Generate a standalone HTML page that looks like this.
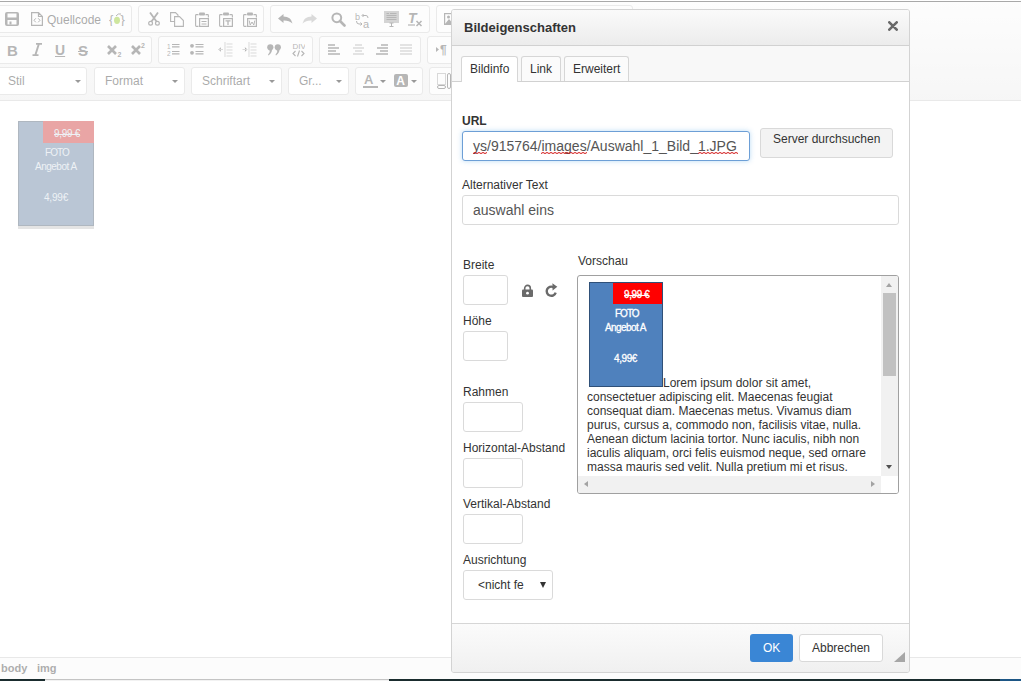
<!DOCTYPE html>
<html><head><meta charset="utf-8">
<style>
*{box-sizing:border-box}
html,body{margin:0;padding:0;width:1021px;height:681px;overflow:hidden;background:#fff;font-family:"Liberation Sans",sans-serif}
.a{position:absolute}
.t{position:absolute;white-space:nowrap;line-height:1}
#editor{position:absolute;left:0;top:0;width:1021px;height:681px}
.topline{left:0;top:1px;width:1021px;height:1px;background:#a9a9a9}
.top{left:0;top:2px;width:1021px;height:99px;background:linear-gradient(#fafafa,#ededed);border-bottom:1px solid #d3d3d3}
.grp{position:absolute;border:1px solid #d4d4d4;border-radius:3px;background:#fafafa}
.cmb{position:absolute;border:1px solid #d4d4d4;border-radius:3px;background:#fff}
.cmb span{position:absolute;left:11px;top:8px;line-height:1;white-space:nowrap}
.cmb i{position:absolute;top:12px;width:0;height:0;border-left:3px solid transparent;border-right:3px solid transparent;border-top:3px solid #575757}
.ic{position:absolute}
.status{left:0;top:657px;width:1021px;height:22px;background:#f8f8f8;border-top:1px solid #d1d1d1}
.status span{position:absolute;top:5px;font-size:11px;line-height:1;font-weight:bold;color:#5a5a5a}
#overlay{position:absolute;left:0;top:0;width:1021px;height:679px;background:rgba(255,255,255,0.5)}
.bottomstrip{left:0;top:679px;width:1021px;height:2px;background:#1b2e30}
/* dialog */
#dlg{position:absolute;left:451px;top:9px;width:459px;height:664px;border:1px solid #d3d3d3;border-radius:3px;background:#fff;overflow:hidden}
#dlg .hdr{position:absolute;left:0;top:0;width:457px;height:36px;background:linear-gradient(#fafafa,#ececec);border-bottom:1px solid #d1d1d1}
#dlg .tabs{position:absolute;left:0;top:36px;width:457px;height:36px;background:#f8f8f8;border-bottom:1px solid #d1d1d1}
.tab{position:absolute;top:10px;height:25px;border:1px solid #d6d6d6;border-bottom:0;border-radius:3px 3px 0 0;background:#fbfbfb;font-size:12px;color:#333}
.tab span{position:absolute;top:6px;line-height:1;white-space:nowrap}
.lbl{position:absolute;font-size:12px;line-height:1;color:#333;white-space:nowrap}
.inp{position:absolute;border:1px solid #dadada;border-radius:3px;background:#fff}
#dlg .ftr{position:absolute;left:0;top:613px;width:457px;height:49px;background:linear-gradient(#fbfbfb,#f0f0f0);border-top:1px solid #d6d6d6}
.btn{position:absolute;border-radius:3px;font-size:12px;line-height:1;white-space:nowrap}
.prev{position:absolute;left:125px;top:265px;width:322px;height:219px;border:1px solid #a0a0a0;border-radius:3px;background:#fff;overflow:hidden}
.ln{position:absolute;font-size:12px;line-height:14px;color:#333;white-space:nowrap}
.prev .txt{position:absolute;left:10px;top:102px;font-size:12px;line-height:14px;color:#333;width:290px}
</style></head><body>
<div id="editor">
<div class="a top"></div>
<div class="grp" style="left:-3px;top:5px;width:135px;height:28px"></div>
<div class="grp" style="left:138px;top:5px;width:126px;height:28px"></div>
<div class="grp" style="left:270px;top:5px;width:160px;height:28px"></div>
<div class="grp" style="left:436px;top:5px;width:197px;height:28px"></div>
<div class="grp" style="left:-3px;top:36px;width:155px;height:28px"></div>
<div class="grp" style="left:158px;top:36px;width:155px;height:28px"></div>
<div class="grp" style="left:319px;top:36px;width:102px;height:28px"></div>
<div class="grp" style="left:427px;top:36px;width:300px;height:28px"></div>
<div class="cmb" style="left:-3px;top:67px;width:90px;height:28px"></div><div class="t" style="left:8px;top:75px;font-size:12px;color:#555">Stil</div><div class="a" style="left:75px;top:80px;width:0;height:0;border-left:3px solid transparent;border-right:3px solid transparent;border-top:3px solid #333"></div>
<div class="cmb" style="left:94px;top:67px;width:91px;height:28px"></div><div class="t" style="left:105px;top:75px;font-size:12px;color:#555">Format</div><div class="a" style="left:172px;top:80px;width:0;height:0;border-left:3px solid transparent;border-right:3px solid transparent;border-top:3px solid #333"></div>
<div class="cmb" style="left:191px;top:67px;width:91px;height:28px"></div><div class="t" style="left:202px;top:75px;font-size:12px;color:#555">Schriftart</div><div class="a" style="left:269px;top:80px;width:0;height:0;border-left:3px solid transparent;border-right:3px solid transparent;border-top:3px solid #333"></div>
<div class="cmb" style="left:288px;top:67px;width:61px;height:28px"></div><div class="t" style="left:299px;top:75px;font-size:12px;color:#555">Gr...</div><div class="a" style="left:336px;top:80px;width:0;height:0;border-left:3px solid transparent;border-right:3px solid transparent;border-top:3px solid #333"></div>
<div class="grp" style="left:355px;top:67px;width:68px;height:28px"></div>
<div class="grp" style="left:429px;top:67px;width:300px;height:28px"></div>
<svg class="a" style="left:5px;top:12px" width="14" height="14" viewBox="0 0 14 14" ><path fill="#6c6c6c" fill-rule="evenodd" d="M2,0 H12 A2,2 0 0 1 14,2 V12 A2,2 0 0 1 12,14 H2 A2,2 0 0 1 0,12 V2 A2,2 0 0 1 2,0 Z M2.5,1.5 V5.5 H11.5 V1.5 Z M2.5,8 V12.5 H11.5 V8 Z"/><rect x="4.5" y="9.5" width="2" height="3" fill="#6c6c6c"/></svg>
<svg class="a" style="left:31px;top:12px" width="12" height="14" viewBox="0 0 12 14" ><path fill="none" stroke="#6c6c6c" stroke-width="1.2" d="M0.6,0.6 H7.5 L11.4,4.5 V13.4 H0.6 Z M7.5,0.6 V4.5 H11.4"/><path fill="none" stroke="#6c6c6c" stroke-width="1" d="M4.8,6.3 L3,8.3 L4.8,10.3 M7.2,6.3 L9,8.3 L7.2,10.3"/></svg>
<div class="t" style="left:47px;top:14px;font-size:12px;color:#555">Quellcode</div>
<svg class="a" style="left:109px;top:12px" width="17" height="14" viewBox="0 0 17 14" ><text x="0" y="11.5" font-family="Liberation Sans" font-size="13" fill="#6c6c6c">{</text><text x="11.5" y="11.5" font-family="Liberation Sans" font-size="13" fill="#6c6c6c">}</text><ellipse cx="8" cy="8.3" rx="3" ry="3.6" fill="#9ccc3c"/><path d="M7,4 Q9,1 12,2" stroke="#6c6c6c" stroke-width="1" fill="none"/></svg>
<svg class="a" style="left:148px;top:12px" width="12" height="14" viewBox="0 0 12 14" ><path d="M2,0.5 L8.5,9.5 M10,0.5 L3.5,9.5" stroke="#6c6c6c" stroke-width="1.8"/><circle cx="2.6" cy="11.3" r="1.9" fill="none" stroke="#6c6c6c" stroke-width="1.2"/><circle cx="9.4" cy="11.3" r="1.9" fill="none" stroke="#6c6c6c" stroke-width="1.2"/></svg>
<svg class="a" style="left:170px;top:12px" width="14" height="15" viewBox="0 0 14 15" ><path fill="none" stroke="#6c6c6c" stroke-width="1.1" d="M4.6,9.5 H0.6 V0.6 H5.5 L8,3.1 V4.6 M4.6,4.6 H9.5 L13.4,8.5 V14.4 H4.6 Z"/></svg>
<svg class="a" style="left:195px;top:12px" width="14" height="15" viewBox="0 0 14 15" ><path fill="none" stroke="#6c6c6c" stroke-width="1.1" d="M3.5,2.6 H1.4 Q0.6,2.6 0.6,3.4 V13.6 Q0.6,14.4 1.4,14.4 H3.5 M10.5,2.6 H12.6 Q13.4,2.6 13.4,3.4 V5.5"/><rect x="4" y="0.5" width="6" height="3" rx="1" fill="#6c6c6c"/><rect x="4.6" y="6.6" width="8.8" height="7.8" fill="none" stroke="#6c6c6c" stroke-width="1.2"/><path d="M6.5,9.5 H11.5 M6.5,12 H11.5" stroke="#6c6c6c" stroke-width="1"/></svg>
<svg class="a" style="left:219px;top:12px" width="14" height="15" viewBox="0 0 14 15" ><path fill="none" stroke="#6c6c6c" stroke-width="1.1" d="M3.5,2.6 H1.4 Q0.6,2.6 0.6,3.4 V13.6 Q0.6,14.4 1.4,14.4 H3.5 M10.5,2.6 H12.6 Q13.4,2.6 13.4,3.4 V5.5"/><rect x="4" y="0.5" width="6" height="3" rx="1" fill="#6c6c6c"/><rect x="4.6" y="6.6" width="8.8" height="7.8" fill="none" stroke="#6c6c6c" stroke-width="1.2"/><path d="M6.5,8.8 H11.5 M9,8.8 V13" stroke="#6c6c6c" stroke-width="1.3"/></svg>
<svg class="a" style="left:243px;top:12px" width="14" height="15" viewBox="0 0 14 15" ><path fill="none" stroke="#6c6c6c" stroke-width="1.1" d="M3.5,2.6 H1.4 Q0.6,2.6 0.6,3.4 V13.6 Q0.6,14.4 1.4,14.4 H3.5 M10.5,2.6 H12.6 Q13.4,2.6 13.4,3.4 V5.5"/><rect x="4" y="0.5" width="6" height="3" rx="1" fill="#6c6c6c"/><rect x="4.6" y="6.6" width="8.8" height="7.8" fill="none" stroke="#6c6c6c" stroke-width="1.2"/><path d="M6.2,8.5 L7.2,13 L9,10 L10.8,13 L11.8,8.5" stroke="#6c6c6c" stroke-width="1" fill="none"/></svg>
<svg class="a" style="left:278px;top:14px" width="15" height="10" viewBox="0 0 15 10" ><path d="M0,4.5 L5.5,0 V2.6 Q13,2.6 14.5,9.5 Q11,6.3 5.5,6.5 V9 Z" fill="#6c6c6c"/></svg>
<svg class="a" style="left:302px;top:14px" width="15" height="10" viewBox="0 0 15 10" ><path d="M15,4.5 L9.5,0 V2.6 Q2,2.6 0.5,9.5 Q4,6.3 9.5,6.5 V9 Z" fill="#b5b5b5"/></svg>
<svg class="a" style="left:331px;top:12px" width="15" height="15" viewBox="0 0 15 15" ><circle cx="5.8" cy="5.8" r="4.4" fill="none" stroke="#6c6c6c" stroke-width="2"/><path d="M9,9 L13.5,13.5" stroke="#6c6c6c" stroke-width="2.6" stroke-linecap="round"/></svg>
<svg class="a" style="left:355px;top:12px" width="16" height="16" viewBox="0 0 16 16" ><text x="0" y="8" font-family="Liberation Sans" font-size="9" fill="#6c6c6c">b</text><text x="8" y="15.5" font-family="Liberation Sans" font-size="11" fill="#6c6c6c">a</text><path d="M7.5,3.5 H11 Q13,3.5 13,6 M8.5,2 L7,3.5 L8.5,5 M1.5,9 Q1.5,12 4,12 H7 M5.5,10.5 L7,12 L5.5,13.5" stroke="#6c6c6c" stroke-width="1" fill="none"/></svg>
<svg class="a" style="left:384px;top:11px" width="15" height="16" viewBox="0 0 15 16" ><rect x="0" y="0" width="15" height="12" fill="#a8a8a8"/><path d="M2.5,2.5 H5 M6,2.5 H12.5 M2.5,4.5 H12.5 M2.5,6.5 H12.5 M2.5,8.5 H12.5" stroke="#6c6c6c" stroke-width="1"/><path d="M5.5,12 H9.5 M7.5,12 V15.5 M5.5,15.5 H9.5" stroke="#6c6c6c" stroke-width="1"/></svg>
<svg class="a" style="left:408px;top:12px" width="15" height="15" viewBox="0 0 15 15" ><text x="0" y="11" font-family="Liberation Sans" font-weight="bold" font-style="italic" font-size="14" fill="#6c6c6c">T</text><path d="M0,13 H7" stroke="#6c6c6c" stroke-width="1.2"/><path d="M8.5,9 L13.5,14 M13.5,9 L8.5,14" stroke="#6c6c6c" stroke-width="1.5"/></svg>
<svg class="a" style="left:444px;top:13px" width="14" height="12" viewBox="0 0 14 12" ><rect x="0.6" y="0.6" width="12.8" height="10.8" fill="none" stroke="#6c6c6c" stroke-width="1.2"/><circle cx="4.5" cy="4" r="1.5" fill="#6c6c6c"/><path d="M1,11 L5,6 L7.5,9 L9.5,7.5 L13,11 Z" fill="#6c6c6c"/></svg>
<div class="t" style="left:7px;top:43px;font-size:15px;font-weight:bold;font-style:normal;color:#6c6c6c;">B</div>
<svg class="a" style="left:32px;top:43px" width="11" height="13" viewBox="0 0 11 13" ><path d="M4,0 H10 V1.7 H7.6 L4.6,11.3 H6.5 V13 H0.5 V11.3 H2.6 L5.6,1.7 H4 Z" fill="#6c6c6c"/></svg>
<div class="t" style="left:55px;top:43px;font-size:14px;font-weight:bold;font-style:normal;color:#6c6c6c;text-decoration:underline">U</div>
<div class="t" style="left:78px;top:43px;font-size:15px;font-weight:bold;font-style:normal;color:#6c6c6c;text-decoration:line-through">S</div>
<svg class="a" style="left:107px;top:44px" width="15" height="13" viewBox="0 0 15 13" ><path d="M1,2 L9,10 M9,2 L1,10" stroke="#6c6c6c" stroke-width="2.6"/><text x="10.5" y="12.5" font-family="Liberation Sans" font-weight="bold" font-size="7" fill="#6c6c6c">2</text></svg>
<svg class="a" style="left:131px;top:42px" width="15" height="13" viewBox="0 0 15 13" ><path d="M1,4 L9,12 M9,4 L1,12" stroke="#6c6c6c" stroke-width="2.6"/><text x="10" y="6" font-family="Liberation Sans" font-weight="bold" font-size="7" fill="#6c6c6c">2</text></svg>
<svg class="a" style="left:167px;top:43px" width="13" height="13" viewBox="0 0 13 13" ><text x="0" y="5.5" font-family="Liberation Sans" font-size="6.5" fill="#6c6c6c">1</text><text x="0" y="12.5" font-family="Liberation Sans" font-size="6.5" fill="#6c6c6c">2</text><path d="M5,1.5 H12.5 M5,3.8 H12.5 M5,8.5 H12.5 M5,10.8 H12.5" stroke="#6c6c6c" stroke-width="1.2"/></svg>
<svg class="a" style="left:190px;top:43px" width="14" height="13" viewBox="0 0 14 13" ><circle cx="2" cy="2.8" r="1.9" fill="#6c6c6c"/><circle cx="2" cy="9.8" r="1.9" fill="#6c6c6c"/><path d="M5.5,1.5 H13.5 M5.5,3.8 H13.5 M5.5,8.5 H13.5 M5.5,10.8 H13.5" stroke="#6c6c6c" stroke-width="1.2"/></svg>
<svg class="a" style="left:218px;top:42px" width="15" height="15" viewBox="0 0 15 15" ><path d="M0.5,7.5 H5 M2.5,5.5 L0.5,7.5 L2.5,9.5 M7,0 V15 M8.5,2 H14.5 M8.5,5 H14.5 M8.5,8 H14.5 M8.5,11 H14.5 M8.5,14 H14.5" stroke="#b5b5b5" stroke-width="1"/></svg>
<svg class="a" style="left:242px;top:42px" width="15" height="15" viewBox="0 0 15 15" ><path d="M0.5,7.5 H5 M3,5.5 L5,7.5 L3,9.5 M7,0 V15 M8.5,2 H14.5 M8.5,5 H14.5 M8.5,8 H14.5 M8.5,11 H14.5 M8.5,14 H14.5" stroke="#b5b5b5" stroke-width="1"/></svg>
<svg class="a" style="left:267px;top:44px" width="15" height="12" viewBox="0 0 15 12" ><circle cx="3.3" cy="3.3" r="3.1" fill="#6c6c6c"/><path d="M4.6,4.5 Q6,8 1.5,11.5 L1,10.8 Q3.6,8 2.6,5.5 Z" fill="#6c6c6c"/><circle cx="10.8" cy="3.3" r="3.1" fill="#6c6c6c"/><path d="M12.1,4.5 Q13.5,8 9,11.5 L8.5,10.8 Q11.1,8 10.1,5.5 Z" fill="#6c6c6c"/></svg>
<svg class="a" style="left:292px;top:42px" width="13" height="15" viewBox="0 0 13 15" ><text x="0.5" y="7" font-family="Liberation Sans" font-size="8" fill="#6c6c6c">DIV</text><path d="M3.5,9 L1,11.5 L3.5,14 M9.5,9 L12,11.5 L9.5,14 M7.5,8.5 L5.5,14.5" stroke="#6c6c6c" stroke-width="1.1" fill="none"/></svg>
<svg class="a" style="left:328px;top:44px" width="13" height="11" viewBox="0 0 13 11" ><path d="M0,1 H7 M0,4 H11 M0,7 H8 M0,10 H12 " stroke="#6c6c6c" stroke-width="1.5"/></svg>
<svg class="a" style="left:352px;top:44px" width="13" height="11" viewBox="0 0 13 11" ><path d="M3,1 H10 M1,4 H12 M3,7 H10 M1,10 H12 " stroke="#b5b5b5" stroke-width="1.5"/></svg>
<svg class="a" style="left:376px;top:44px" width="13" height="11" viewBox="0 0 13 11" ><path d="M5,1 H12 M1,4 H12 M4,7 H12 M0,10 H12 " stroke="#6c6c6c" stroke-width="1.5"/></svg>
<svg class="a" style="left:400px;top:44px" width="13" height="11" viewBox="0 0 13 11" ><path d="M0,1 H12 M0,4 H12 M0,7 H12 M0,10 H12 " stroke="#b5b5b5" stroke-width="1.5"/></svg>
<svg class="a" style="left:436px;top:43px" width="14" height="13" viewBox="0 0 14 13" ><path d="M0,4 L3,6.5 L0,9 Z" fill="#6c6c6c"/><text x="4" y="11" font-family="Liberation Sans" font-weight="bold" font-size="12" fill="#6c6c6c">&#182;</text></svg>
<svg class="a" style="left:363px;top:73px" width="16" height="16" viewBox="0 0 16 16" ><text x="1" y="11" font-family="Liberation Sans" font-weight="bold" font-size="13" fill="#6c6c6c">A</text><rect x="0" y="13" width="15" height="2" fill="#6c6c6c"/></svg>
<div class="a" style="left:380px;top:80px;width:0;height:0;border-left:3px solid transparent;border-right:3px solid transparent;border-top:3px solid #333"></div>
<svg class="a" style="left:394px;top:74px" width="14" height="13" viewBox="0 0 14 13" ><rect x="0" y="0" width="14" height="13" rx="2" fill="#6c6c6c"/><text x="2.3" y="11" font-family="Liberation Sans" font-weight="bold" font-size="12" fill="#fff">A</text></svg>
<div class="a" style="left:411px;top:80px;width:0;height:0;border-left:3px solid transparent;border-right:3px solid transparent;border-top:3px solid #333"></div>
<svg class="a" style="left:437px;top:73px" width="16" height="16" viewBox="0 0 16 16" ><rect x="0.5" y="0.5" width="8" height="11" fill="none" stroke="#6c6c6c" stroke-dasharray="1,1"/><rect x="0.5" y="12.5" width="8" height="3" rx="1.5" fill="none" stroke="#6c6c6c"/><rect x="10.5" y="0.5" width="3" height="15" rx="1.5" fill="none" stroke="#6c6c6c"/></svg>
<div class="a" style="left:18px;top:121px;width:76px;height:105px;background:#758dab;border:1px solid #5f6e80">
  <div class="a" style="left:24px;top:-1px;width:51px;height:22px;background:#d34b4b"></div>
  <div class="t" style="left:35px;top:7px;font-size:10px;color:#dde3ea;letter-spacing:-0.3px;text-decoration:line-through">9,99 €</div>
  <div class="t" style="left:26px;top:26px;font-size:10px;color:#dde3ea;letter-spacing:-0.9px">FOTO</div>
  <div class="t" style="left:16px;top:40px;font-size:10px;color:#dde3ea;letter-spacing:-0.5px">Angebot A</div>
  <div class="t" style="left:25px;top:71px;font-size:10px;color:#dde3ea;letter-spacing:-0.2px">4,99€</div>
</div>
<div class="a" style="left:18px;top:226px;width:76px;height:3px;background:#c8c8c8"></div>
<div class="a status"><span style="left:1px">body</span><span style="left:37px">img</span></div>
</div>
<div id="overlay"></div>
<div class="a topline"></div>
<div class="a" style="left:0;top:679px;width:45px;height:2px;background:#1a2c2e"></div>
<div class="a" style="left:45px;top:679px;width:344px;height:1px;background:#c4c4c4"></div>
<div class="a" style="left:45px;top:680px;width:344px;height:1px;background:#f2f2f2"></div>
<div class="a" style="left:389px;top:679px;width:611px;height:2px;background:#1a2c2e"></div>
<div class="a" style="left:1000px;top:679px;width:21px;height:2px;background:#1d5685"></div>
<div id="dlg">
  <div class="hdr"><div class="t" style="left:12px;top:11px;font-size:13px;font-weight:bold;color:#333">Bildeigenschaften</div></div>
  <div class="tabs">
    <div class="tab" style="left:9px;width:57px;background:#fff;height:26px"><span style="left:8px">Bildinfo</span></div>
    <div class="tab" style="left:69px;width:40px"><span style="left:8px">Link</span></div>
    <div class="tab" style="left:112px;width:65px"><span style="left:8px">Erweitert</span></div>
  </div>
  <div class="lbl" style="left:10px;top:105px;font-weight:bold;color:#333">URL</div>
  <div class="inp" style="left:10px;top:121px;width:288px;height:30px;border-color:#6d9fd6;box-shadow:0 0 5px rgba(102,175,233,0.45)"></div>
  <div class="t" style="left:21px;top:129px;font-size:14px;color:#555">ys/915764/images/Auswahl_1_Bild_1.JPG</div>
  <div class="btn" style="left:308px;top:118px;width:133px;height:30px;border:1px solid #d9d9d9;background:#f3f3f3;color:#333"><span class="t" style="left:12px;top:4px">Server durchsuchen</span></div>
  <div class="lbl" style="left:10px;top:169px">Alternativer Text</div>
  <div class="inp" style="left:10px;top:185px;width:437px;height:30px"></div>
  <div class="t" style="left:21px;top:193px;font-size:14px;color:#555">auswahl eins</div>

  <div class="lbl" style="left:11px;top:249px">Breite</div>
  <div class="inp" style="left:11px;top:265px;width:45px;height:30px"></div>
  <div class="lbl" style="left:11px;top:305px">Höhe</div>
  <div class="inp" style="left:11px;top:321px;width:45px;height:30px"></div>
  <div class="lbl" style="left:11px;top:376px">Rahmen</div>
  <div class="inp" style="left:11px;top:392px;width:60px;height:30px"></div>
  <div class="lbl" style="left:11px;top:432px">Horizontal-Abstand</div>
  <div class="inp" style="left:11px;top:448px;width:60px;height:30px"></div>
  <div class="lbl" style="left:11px;top:488px">Vertikal-Abstand</div>
  <div class="inp" style="left:11px;top:504px;width:60px;height:30px"></div>
  <div class="lbl" style="left:11px;top:544px">Ausrichtung</div>
  <div class="inp" style="left:11px;top:560px;width:90px;height:30px"></div>
  <div class="t" style="left:26px;top:569px;font-size:12px;color:#333">&lt;nicht fe</div>
  <div class="a" style="left:88px;top:572px;width:0;height:0;border-left:3.5px solid transparent;border-right:3.5px solid transparent;border-top:6px solid #333"></div>
  <div class="lbl" style="left:126px;top:245px">Vorschau</div>
  <div class="prev">
    <div class="a" style="left:11px;top:6px;width:74px;height:105px;background:#4f81bd;border:1px solid #2f5078">
      <div class="a" style="left:23px;top:0;width:49px;height:21px;background:#f00"></div>
      <div class="t" style="left:34px;top:7px;font-size:10px;color:#fff;letter-spacing:-0.4px;text-decoration:line-through;-webkit-text-stroke:0.3px #fff">9,99 €</div>
      <div class="t" style="left:25px;top:26px;font-size:10px;color:#fff;letter-spacing:-1px;-webkit-text-stroke:0.3px #fff">FOTO</div>
      <div class="t" style="left:15px;top:40px;font-size:10px;color:#fff;letter-spacing:-0.6px;-webkit-text-stroke:0.3px #fff">Angebot A</div>
      <div class="t" style="left:24px;top:71px;font-size:10px;color:#fff;letter-spacing:-0.4px;-webkit-text-stroke:0.3px #fff">4,99€</div>
    </div>
    <div class="ln" style="left:85px;top:100px">Lorem ipsum dolor sit amet,</div>
    <div class="ln" style="left:9px;top:114px">consectetuer adipiscing elit. Maecenas feugiat</div>
    <div class="ln" style="left:9px;top:128px">consequat diam. Maecenas metus. Vivamus diam</div>
    <div class="ln" style="left:9px;top:142px">purus, cursus a, commodo non, facilisis vitae, nulla.</div>
    <div class="ln" style="left:9px;top:156px">Aenean dictum lacinia tortor. Nunc iaculis, nibh non</div>
    <div class="ln" style="left:9px;top:170px">iaculis aliquam, orci felis euismod neque, sed ornare</div>
    <div class="ln" style="left:9px;top:184px">massa mauris sed velit. Nulla pretium mi et risus.</div>
    <div class="ln" style="left:9px;top:198px">Sed sit amet risus.</div>
    <div class="a" style="left:303px;top:0;width:17px;height:200px;background:#f1f1f1">
      <div class="a" style="left:5px;top:7px;width:0;height:0;border-left:3.5px solid transparent;border-right:3.5px solid transparent;border-bottom:4px solid #a3a3a3"></div>
      <div class="a" style="left:2px;top:17px;width:13px;height:83px;background:#c1c1c1"></div>
      <div class="a" style="left:5px;top:189px;width:0;height:0;border-left:3.5px solid transparent;border-right:3.5px solid transparent;border-top:4px solid #505050"></div>
    </div>
    <div class="a" style="left:0;top:200px;width:303px;height:17px;background:#f1f1f1">
      <div class="a" style="left:6px;top:5px;width:0;height:0;border-top:3.5px solid transparent;border-bottom:3.5px solid transparent;border-right:4px solid #a3a3a3"></div>
      <div class="a" style="left:293px;top:5px;width:0;height:0;border-top:3.5px solid transparent;border-bottom:3.5px solid transparent;border-left:4px solid #a3a3a3"></div>
    </div>
    <div class="a" style="left:303px;top:200px;width:17px;height:17px;background:#fff"></div>
  </div>

  <svg class="a" style="left:21px;top:142px" width="16" height="3"><polyline points="0,1.5 2,0.5 4,1.5 6,0.5 8,1.5 10,0.5 12,1.5 14,0.5" fill="none" stroke="#d01010" stroke-width="1"/></svg>
  <svg class="a" style="left:89px;top:142px" width="47" height="3"><polyline points="0,1.5 2,0.5 4,1.5 6,0.5 8,1.5 10,0.5 12,1.5 14,0.5 16,1.5 18,0.5 20,1.5 22,0.5 24,1.5 26,0.5 28,1.5 30,0.5 32,1.5 34,0.5 36,1.5 38,0.5 40,1.5 42,0.5 44,1.5 46,0.5" fill="none" stroke="#d01010" stroke-width="1"/></svg>
  <svg class="a" style="left:246px;top:142px" width="41" height="3"><polyline points="0,1.5 2,0.5 4,1.5 6,0.5 8,1.5 10,0.5 12,1.5 14,0.5 16,1.5 18,0.5 20,1.5 22,0.5 24,1.5 26,0.5 28,1.5 30,0.5 32,1.5 34,0.5 36,1.5 38,0.5 40,1.5" fill="none" stroke="#d01010" stroke-width="1"/></svg>
  <svg class="a" style="left:436px;top:11px" width="10" height="10"><path d="M1.3,1.3 L8.7,8.7 M8.7,1.3 L1.3,8.7" stroke="#6a6a6a" stroke-width="2.6" stroke-linecap="round"/></svg>
  <svg class="a" style="left:70px;top:274px" width="11" height="13"><path d="M2.7,6.5 V4.2 A2.8,2.8 0 0 1 8.3,4.2 V6.5" fill="none" stroke="#6a6a6a" stroke-width="1.6"/><rect x="0" y="5.5" width="11" height="7.5" rx="1" fill="#6a6a6a"/><circle cx="5.5" cy="9.2" r="1.4" fill="#fff"/></svg>
  <svg class="a" style="left:93px;top:273px" width="13" height="15"><path d="M10.7,9.6 A4.6,4.6 0 1 1 8.4,4.1" fill="none" stroke="#6a6a6a" stroke-width="2.4"/><path d="M7.4,0.3 L12.3,3.8 L7.6,7.4 Z" fill="#6a6a6a"/></svg>
  <div class="ftr"></div>
  <div class="btn" style="left:298px;top:624px;width:43px;height:28px;background:#3a86d5;color:#fff"><span class="t" style="left:13px;top:8px">OK</span></div>
  <div class="btn" style="left:347px;top:624px;width:84px;height:28px;background:#fff;border:1px solid #d9d9d9;color:#333"><span class="t" style="left:12px;top:7px">Abbrechen</span></div>
  <svg class="a" style="left:442px;top:642px" width="11" height="10"><path d="M11,0 L11,10 L0,10 Z" fill="#a6a6a6"/></svg>
</div>
</body></html>
